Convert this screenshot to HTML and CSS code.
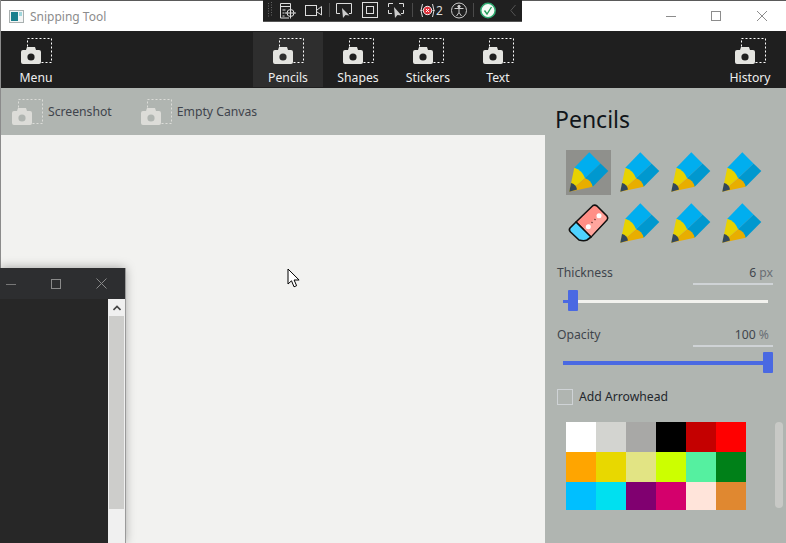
FILE: index.html
```html
<!DOCTYPE html>
<html lang="en">

<head>
    <meta charset="UTF-8">
    <title>Snipping Tool</title>
    <link rel="stylesheet" href="styles.css">
</head>

<body>
    <svg class="defs" width="0" height="0">
        <symbol id="cam" viewBox="0 0 31 28">
            <rect class="dash" x="6.5" y="0.5" width="24" height="24"></rect>
            <path class="cam-body" d="M2 12h3l1-3h8l1 3h3a2 2 0 0 1 2 2v10a2 2 0 0 1-2 2H2a2 2 0 0 1-2-2V14a2 2 0 0 1 2-2z"></path>
            <circle class="cam-hole" cx="10" cy="19" r="3.6"></circle>
        </symbol>
        <symbol id="pencil" viewBox="0 0 45 45">
            <path fill="#00aeef" d="M23.3 2.3L34.5 13.5L19 28.3L8.3 17.7z"></path>
            <path fill="#0098cf" d="M34.5 13.5L42.3 21L26.7 36.7L19 28.3z"></path>
            <path fill="#e8d200" d="M8.3 17.7Q16 20 19 28.3L3.3 41.7z"></path>
            <path fill="#e8ae00" d="M19 28.3Q25 30 26.7 36.7L3.3 41.7z"></path>
            <path fill="#33475b" d="M5 33Q10 34 11 39.6L3.3 41.7z"></path>
        </symbol>
    </svg>

    <div class="window">
        <div class="titlebar">
            <svg class="app-icon" width="15" height="13" viewBox="0 0 15 13">
                <rect x="0.5" y="0.5" width="14" height="12" fill="#f4f6f6" stroke="#a9b0b0"></rect>
                <rect x="2" y="2" width="7" height="9" fill="#1a7f8c"></rect>
                <rect x="10" y="2" width="3" height="4" fill="#9fd6dc"></rect>
            </svg>
            <span class="app-name">Snipping Tool</span>
            <div class="win-controls">
                <svg width="12" height="12" viewBox="0 0 12 12"><path d="M1 6.5h10" stroke="#8c8c8c"></path></svg>
                <svg width="12" height="12" viewBox="0 0 12 12"><rect x="1.5" y="1.5" width="9" height="9" fill="none" stroke="#8c8c8c"></rect></svg>
                <svg class="win-close" width="12" height="12" viewBox="0 0 12 12"><path d="M1 1l10 10M11 1L1 11" stroke="#8c8c8c"></path></svg>
            </div>
        </div>

        <div class="toolbar">
            <div class="tab"><svg width="31" height="28"><use href="#cam"></use></svg><span>Menu</span></div>
            <div class="tab-group">
                <div class="tab active"><svg width="31" height="28"><use href="#cam"></use></svg><span>Pencils</span></div>
                <div class="tab"><svg width="31" height="28"><use href="#cam"></use></svg><span>Shapes</span></div>
                <div class="tab"><svg width="31" height="28"><use href="#cam"></use></svg><span>Stickers</span></div>
                <div class="tab"><svg width="31" height="28"><use href="#cam"></use></svg><span>Text</span></div>
            </div>
            <div class="tab"><svg width="31" height="28"><use href="#cam"></use></svg><span>History</span></div>
        </div>

        <div class="content">
            <div class="left">
                <div class="subbar">
                    <div class="sub-item"><svg width="31" height="28"><use href="#cam"></use></svg><span>Screenshot</span></div>
                    <div class="sub-item"><svg width="31" height="28"><use href="#cam"></use></svg><span>Empty Canvas</span></div>
                </div>
                <div class="canvas"></div>
            </div>

            <div class="panel">
                <h2>Pencils</h2>
                <div class="tools">
                    <div class="tool selected"><svg width="45" height="45"><use href="#pencil"></use></svg></div>
                    <div class="tool"><svg width="45" height="45"><use href="#pencil"></use></svg></div>
                    <div class="tool"><svg width="45" height="45"><use href="#pencil"></use></svg></div>
                    <div class="tool"><svg width="45" height="45"><use href="#pencil"></use></svg></div>
                    <div class="tool">
                        <svg width="45" height="45" viewBox="0 0 45 45">
                            <path fill="#ff8f86" stroke="#111" stroke-width="1.6" stroke-linejoin="round" d="M27 4.5Q29 3.500 31 5L41 15Q42.500 17 41 19L25 36L10 21z"></path>
                            <path fill="#ffa59d" d="M35 11.500L40 16Q41 17 40 18.500L25 35L18 28z"></path>
                            <path fill="#4fd2ff" stroke="#111" stroke-width="1.6" stroke-linejoin="round" d="M10 21L25 36L21 39Q18 40.500 13 39L4.500 31Q2.500 29 4 27z"></path>
                            <circle cx="33" cy="14.700" r="2.500" fill="#fff"></circle>
                            <circle cx="22.300" cy="25.700" r="2.500" fill="#fff"></circle>
                            <path d="M25.500 21l1 1M28.500 18l1 1" stroke="#6a3430" stroke-width="1.300"></path>
                        </svg>
                    </div>
                    <div class="tool"><svg width="45" height="45"><use href="#pencil"></use></svg></div>
                    <div class="tool"><svg width="45" height="45"><use href="#pencil"></use></svg></div>
                    <div class="tool"><svg width="45" height="45"><use href="#pencil"></use></svg></div>
                </div>

                <div class="field-row first">
                    <span class="field-label">Thickness</span>
                    <span class="value">6 <em>px</em></span>
                </div>
                <div class="slider">
                    <div class="track-fill" style="width: 5px"></div>
                    <div class="thumb"></div>
                </div>

                <div class="field-row second">
                    <span class="field-label">Opacity</span>
                    <span class="value pct">100 <em>%</em></span>
                </div>
                <div class="slider full">
                    <div class="track-fill" style="width: 200px"></div>
                    <div class="thumb"></div>
                </div>

                <label class="check"><span class="box"></span>Add Arrowhead</label>

                <div class="swatches">
                    <i style="background: #ffffff"></i>
                    <i style="background: #d3d4d0"></i>
                    <i style="background: #a8a8a6"></i>
                    <i style="background: #000000"></i>
                    <i style="background: #c40000"></i>
                    <i style="background: #ff0000"></i>
                    <i style="background: #ffa500"></i>
                    <i style="background: #e8d800"></i>
                    <i style="background: #e2e484"></i>
                    <i style="background: #ccff00"></i>
                    <i style="background: #55f0a0"></i>
                    <i style="background: #008018"></i>
                    <i style="background: #00bfff"></i>
                    <i style="background: #00e0f0"></i>
                    <i style="background: #800070"></i>
                    <i style="background: #d4006c"></i>
                    <i style="background: #ffe4da"></i>
                    <i style="background: #e08830"></i>
                </div>
                <div class="panel-scroll"></div>
            </div>
        </div>
    </div>

    <!-- recording toolbar on top of the window -->
    <div class="float-bar">
        <svg class="grip" width="4" height="16" viewBox="0 0 4 16">
            <path d="M0.500 1v15M3.500 0v15" stroke="#666" stroke-dasharray="1 1.500"></path>
        </svg>
        <svg width="17" height="17" viewBox="0 0 17 17" fill="none" stroke="#ddd">
            <path d="M10 16H1.500V1.500h10V6M1.500 4.500h10M3.500 8h3M3.500 11h2M3.500 14h2"></path>
            <circle cx="11.500" cy="11" r="3.500"></circle>
            <path d="M11.500 5.500v11M6 11h11"></path>
        </svg>
        <svg class="g2" width="17" height="17" viewBox="0 0 17 17" fill="none" stroke="#ddd">
            <rect x="0.500" y="3.500" width="11" height="10"></rect>
            <path d="M12 8l4.500-3.500v8.500L12 10"></path>
        </svg>
        <span class="sep"></span>
        <svg width="16" height="17" viewBox="0 0 16 17" fill="none" stroke="#ddd">
            <path d="M4 11.500H0.500v-10h15v10H13"></path>
            <path d="M6 6l1 10 2.500-3 4 .5z" fill="#ccc" stroke="none"></path>
        </svg>
        <svg class="g3" width="16" height="17" viewBox="0 0 16 17" fill="none" stroke="#ddd">
            <rect x="0.500" y="0.500" width="15" height="15"></rect>
            <rect x="4.500" y="4.500" width="7" height="7"></rect>
        </svg>
        <svg class="g3" width="16" height="17" viewBox="0 0 16 17" fill="none" stroke="#ddd">
            <path d="M0.500 5V1.500H5M11 1.500h4.500V5M15.500 8v3.500H13M0.500 8v3.500H4"></path>
            <path d="M6 5l1 11 2.500-3 4 .5z" fill="#ccc" stroke="none"></path>
        </svg>
        <span class="sep g1"></span>
        <div class="rec g1">
            <svg width="15" height="17" viewBox="0 0 15 17" fill="none" stroke="#ddd">
                <path d="M2.500 2Q-.5 8.500 2.500 15M12.500 2Q15.500 8.500 12.500 15M0.500 8.500h2M12.500 8.500h2"></path>
                <circle cx="7.500" cy="8.500" r="4.200" fill="#e0303a" stroke="#eee"></circle>
                <path d="M6 7l3 3M9 7l-3 3" stroke="#fff"></path>
            </svg>
            <span>2</span>
        </div>
        <svg class="g3" width="16" height="17" viewBox="0 0 16 17" fill="none" stroke="#ccc">
            <circle cx="8" cy="8.500" r="7.500"></circle>
            <circle cx="8" cy="4.500" r="1.200" fill="#ccc"></circle>
            <path d="M3.500 6.500h9M8 6.500v4M8 10.500l-2.500 3.500M8 10.500l2.500 3.500"></path>
        </svg>
        <span class="sep narrow"></span>
        <svg width="16" height="17" viewBox="0 0 16 17" fill="none">
            <circle cx="8" cy="8.500" r="7.200" fill="#f6fbf6" stroke="#2faa70" stroke-width="1.500"></circle>
            <path d="M4.500 8.500l2.500 3.500 4.500-7" stroke="#1f9a55" stroke-width="1.300"></path>
        </svg>
        <svg class="g4" width="6" height="13" viewBox="0 0 6 13" fill="none">
            <path d="M5.500 1L0.800 6.500L5.500 12" stroke="#555"></path>
        </svg>
    </div>

    <!-- other window poking in from the left -->
    <div class="other-window">
        <div class="other-head">
            <svg width="10" height="10" viewBox="0 0 10 10"><path d="M0 5.500h10" stroke="#777"></path></svg>
            <svg width="10" height="10" viewBox="0 0 10 10"><rect x="0.500" y="0.500" width="9" height="9" fill="none" stroke="#8a8a8a"></rect></svg>
            <svg width="11" height="11" viewBox="0 0 11 11"><path d="M0.500 0.500l10 10M10.500 0.500l-10 10" stroke="#8a8a8a"></path></svg>
        </div>
        <div class="other-body">
            <div class="other-scroll">
                <div class="scroll-up">
                    <svg width="8" height="6" viewBox="0 0 8 6"><path d="M0.500 5L4 1.500L7.500 5" fill="none" stroke="#444" stroke-width="1.600"></path></svg>
                </div>
                <div class="scroll-thumb"></div>
            </div>
        </div>
    </div>

    <svg class="cursor" width="14" height="21" viewBox="0 0 14 21">
        <path d="M1 1v15l3.500-3.200 2.500 6 2.600-1.100-2.500-5.700h5z" fill="#fff" stroke="#000"></path>
    </svg>
</body>

</html>
```
FILE: styles.css
```css
/* General styling */
body {
    margin: 0;
    width: 786px;
    height: 543px;
    overflow: hidden;
    position: relative;
    font-family: "Noto Sans", Arial, sans-serif;
    font-size: 12.2px;
    background: #f2f2f0;
}

.defs {
    position: absolute;
}

.window {
    height: 543px;
    display: flex;
    flex-direction: column;
    border-left: 1px solid #8b8b8b;
    box-sizing: border-box;
}

.titlebar {
    height: 31px;
    flex: none;
    box-sizing: border-box;
    border-top: 1px solid #5a5a5a;
    background: #fff;
    display: flex;
    align-items: center;
    padding-left: 8px;
}

.app-icon {
    margin-right: 6px;
}

.app-name {
    color: #8c8c8c;
    font-size: 12px;
}

.win-controls {
    margin-left: auto;
    display: flex;
    gap: 33px;
    padding-right: 18px;
}

.win-close {
    margin-left: 1px;
}

/* Top toolbar */
.toolbar {
    height: 57px;
    flex: none;
    box-sizing: border-box;
    padding: 1px 1px 1px 0;
    background: #1f1f1f;
    display: flex;
    justify-content: space-between;
}

.tab-group {
    display: flex;
}

.tab {
    width: 70px;
    height: 55px;
    box-sizing: border-box;
    padding-top: 6px;
    display: flex;
    flex-direction: column;
    align-items: center;
    color: #eeeeee;
    line-height: 17px;
    --hole: #1f1f1f;
    --dash: #ffffff;
    --cam: #e4e4e0;
}

.tab.active {
    background: #2e2e2e;
    --hole: #2e2e2e;
}

.tab svg {
    flex: none;
}

.tab span {
    margin-top: 3px;
    white-space: nowrap;
}

.dash {
    fill: none;
    stroke: var(--dash);
    stroke-dasharray: 2 2;
}

.cam-body {
    fill: var(--cam);
}

.cam-hole {
    fill: var(--hole);
}

.content {
    flex: 1;
    display: flex;
    min-height: 0;
}

.left {
    width: 544px;
    flex: none;
    display: flex;
    flex-direction: column;
}

.subbar {
    height: 47px;
    flex: none;
    box-sizing: border-box;
    padding: 11px 0 0 11px;
    background: #b0b5b1;
    display: flex;
    gap: 29px;
    align-items: flex-start;
    --hole: #b0b5b1;
    --dash: #dcdcd8;
    --cam: #dcdcd8;
}

.sub-item {
    display: flex;
    gap: 5px;
    color: #3f444c;
    line-height: 17px;
}

.sub-item span {
    margin-top: 4px;
}

.canvas {
    flex: 1;
    background: #f2f2f0;
}

/* Right panel */
.panel {
    flex: 1;
    position: relative;
    background: #b0b5b1;
    padding: 0 13px 0 11px;
    color: #40454c;
}

h2 {
    margin: 14px 0 0 -1px;
    font-size: 23px;
    font-weight: 400;
    line-height: 34px;
    color: #11151a;
}

.tools {
    display: grid;
    grid-template-columns: repeat(4, 45px);
    gap: 6px;
    margin: 14px 0 0 10px;
}

.tool {
    height: 45px;
}

.tool svg {
    display: block;
}

.tool.selected {
    background: #8f908c;
}

.field-row {
    display: flex;
    justify-content: space-between;
    height: 25px;
    margin-left: 1px;
    line-height: 17px;
}

.field-row.first {
    margin-top: 14px;
}

.field-row.second {
    margin-top: 19px;
}

.field-label {
    padding-top: 4px;
}

.value {
    width: 80px;
    box-sizing: border-box;
    border-bottom: 2px solid #cfd3d6;
    text-align: right;
    padding-top: 4px;
}

.value.pct {
    padding-right: 4px;
}

.value em {
    font-style: normal;
    color: #6a6f75;
}

.slider {
    position: relative;
    height: 3px;
    width: 205px;
    margin: 15px 0 0 7px;
    background: #f2f2ee;
}

.slider.full {
    height: 4px;
    margin-top: 14px;
}

.track-fill {
    height: 100%;
    background: #4a69e2;
}

.thumb {
    position: absolute;
    left: 5px;
    top: -10px;
    width: 10px;
    height: 21px;
    border-radius: 1px;
    background: #4a69e2;
}

.slider.full .thumb {
    left: 200px;
    top: -9px;
}

.check {
    display: flex;
    align-items: center;
    gap: 6px;
    margin: 24px 0 0 1px;
    line-height: 16px;
    color: #23272d;
}

.box {
    width: 14px;
    height: 14px;
    border: 1px solid #cfd3d6;
}

.swatches {
    display: grid;
    grid-template-columns: repeat(6, 30px);
    grid-template-rows: 30px 30px 28px;
    margin: 17px 0 0 10px;
}

.swatches i {
    display: block;
}

.panel-scroll {
    position: absolute;
    left: 230px;
    top: 334px;
    width: 8px;
    height: 86px;
    border-radius: 4px;
    background: #c8c9c6;
}

/* Floating bar, over the title */
.float-bar {
    position: absolute;
    left: 263px;
    top: 0;
    width: 259px;
    height: 22px;
    box-sizing: border-box;
    padding: 0 0 1px 5px;
    background: #202020;
    border-bottom: 1px solid #555;
    display: flex;
    align-items: center;
    gap: 7px;
    color: #dddddd;
}

.float-bar svg {
    flex: none;
}

.sep {
    width: 1px;
    height: 14px;
    margin-right: -1px;
    background: #4a4a4a;
}

.sep.narrow {
    margin-left: -1px;
}

.g1 {
    margin-left: 1px;
}

.g2 {
    margin-left: 2px;
}

.g3 {
    margin-left: 3px;
}

.g4 {
    margin-left: 7px;
}

.rec {
    display: flex;
    align-items: center;
    gap: 1px;
    width: 21px;
    font-size: 12px;
}

/* Other window */
.other-window {
    position: absolute;
    left: 0;
    top: 268px;
    width: 125px;
    height: 275px;
    display: flex;
    flex-direction: column;
    background: #272727;
    box-shadow: 1px 0 0 #9a9a9a, 0 0 10px rgba(0, 0, 0, 0.35);
}

.other-head {
    height: 31px;
    flex: none;
    box-sizing: border-box;
    padding: 0 18px 0 6px;
    background: #2d2e30;
    display: flex;
    align-items: center;
    justify-content: space-between;
}

.other-body {
    flex: 1;
    display: flex;
    justify-content: flex-end;
}

.other-scroll {
    width: 17px;
    background: #f0f0f0;
}

.scroll-up {
    height: 17px;
    display: flex;
    align-items: center;
    justify-content: center;
}

.scroll-thumb {
    height: 193px;
    margin: 0 1px;
    background: #cdcdcb;
}

.cursor {
    position: absolute;
    left: 287px;
    top: 268px;
}
```
